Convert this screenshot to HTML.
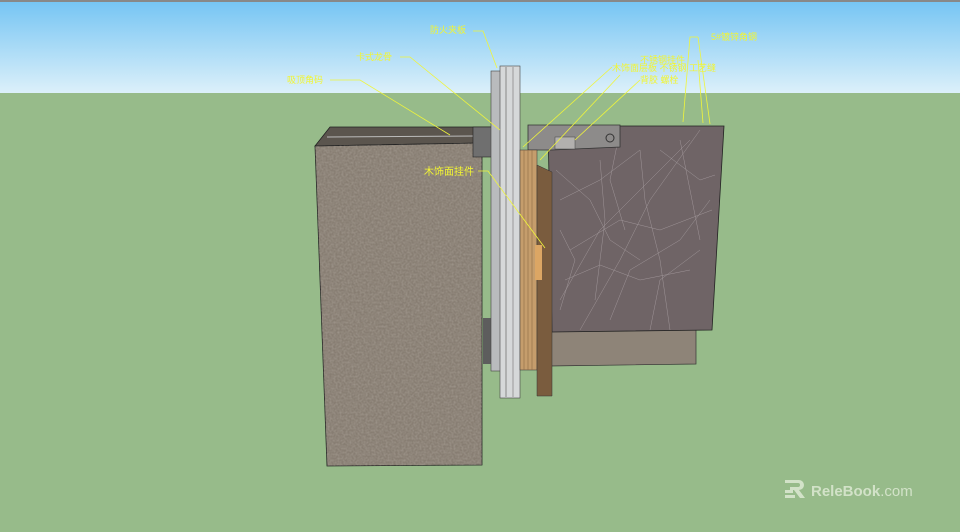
<!DOCTYPE html>
<html><head><meta charset="utf-8"><style>
html,body{margin:0;padding:0;width:960px;height:532px;overflow:hidden;background:#97bb8a}
svg{display:block}
text{font-family:"Liberation Sans","Noto Sans CJK SC",sans-serif}
</style></head><body>
<svg width="960" height="532" viewBox="0 0 960 532">
<defs>
<linearGradient id="sky" x1="0" y1="0" x2="0" y2="1"><stop offset="0" stop-color="#74c4f3"/><stop offset="1" stop-color="#dcf0fa"/></linearGradient>
<filter id="n1"><feTurbulence type="fractalNoise" baseFrequency="0.5" numOctaves="2" seed="3"/><feColorMatrix values="0 0 0 0 0.62  0 0 0 0 0.58  0 0 0 0 0.52  0 0 0 0.5 -0.15"/><feComposite in2="SourceGraphic" operator="in"/></filter>
</defs>
<rect width="960" height="93" fill="url(#sky)"/>
<rect width="960" height="2" fill="#888"/>
<rect y="93" width="960" height="439" fill="#97bb8a"/>
<polygon points="548,330 696,330 696,364 550,366" fill="#8e8478" stroke="#333" stroke-width="0.7"/>
<polygon points="548,126 724,126 712,330 552,332" fill="#6f6466" stroke="#222" stroke-width="0.8"/>
<g stroke="#cfc7ca" stroke-width="0.5" fill="none" opacity="0.5">
<path d="M560,300 L600,230 L640,190 L690,140"/><path d="M580,330 L620,260 L650,200 L700,130"/><path d="M610,320 L630,270 L680,240 L710,200"/><path d="M560,200 L600,180 L640,150"/><path d="M650,330 L660,280 L700,250"/><path d="M570,250 L620,220 L660,230 L712,210"/>
<path d="M600,160 L605,220 L595,300"/><path d="M640,150 L645,200 L660,260 L670,330"/><path d="M680,140 L690,190 L700,240"/><path d="M556,170 L590,200 L610,240 L640,260"/><path d="M565,280 L600,265 L640,280 L690,270"/><path d="M620,130 L610,180 L625,230"/><path d="M660,150 L700,180 L715,175"/><path d="M560,230 L575,260 L560,310"/>
</g>
<polygon points="528,125 620,125 620,147 552,150 528,150" fill="#8d8b8a" stroke="#333" stroke-width="0.8"/>
<rect x="555" y="137" width="20" height="12" fill="#b2b0ae" stroke="#444" stroke-width="0.5"/>
<circle cx="610" cy="138" r="4" fill="none" stroke="#333"/>
<polygon points="315,146 330,127 508,127 508,140 482,143" fill="#5b554e" stroke="#222" stroke-width="0.8"/>
<line x1="327" y1="137" x2="475" y2="136" stroke="#bbb" stroke-width="1"/>
<polygon points="315,146 482,143 482,465 327,466" fill="#877d72" stroke="#222" stroke-width="0.8"/>
<polygon points="315,146 482,143 482,465 327,466" fill="#877d72" filter="url(#n1)"/>
<rect x="483" y="318" width="14" height="46" fill="#5d5d5d"/>
<rect x="473" y="127" width="40" height="30" fill="#6f6f6f" stroke="#222" stroke-width="0.6"/>
<rect x="491" y="71" width="10" height="300" fill="#b9bbbd" stroke="#444" stroke-width="0.6"/>
<rect x="500" y="66" width="20" height="332" fill="#d6d8d9" stroke="#444" stroke-width="0.6"/>
<line x1="506" y1="67" x2="506" y2="397" stroke="#888" stroke-width="1"/>
<line x1="513" y1="67" x2="513" y2="397" stroke="#999" stroke-width="1"/>
<rect x="520" y="150" width="17" height="220" fill="#c59d6c" stroke="#333" stroke-width="0.5"/>
<g stroke="#8b6a45" stroke-width="0.6"><line x1="524" y1="150" x2="524" y2="370"/><line x1="528" y1="150" x2="528" y2="370"/><line x1="532" y1="150" x2="532" y2="370"/></g>
<polygon points="537,165 552,172 552,396 537,396" fill="#7a5c3e" stroke="#333" stroke-width="0.5"/>
<rect x="535" y="245" width="7" height="35" fill="#dca664"/>
<g stroke="#f0f53a" stroke-width="0.8" fill="none">
<path d="M473,31 L483,31 L497,68"/>
<path d="M400,57 L410,57 L500,130"/>
<path d="M330,80 L360,80 L450,135"/>
<path d="M478,171 L488,171 L545,248"/>
<path d="M612,67 L523,147"/><path d="M620,75 L540,160"/><path d="M640,80 L575,140"/>
<path d="M698,37 L690,37 L683,122"/><path d="M698,37 L710,124"/><path d="M698,60 L703,123"/>
</g>
<g fill="#f2f533" font-size="9">
<text x="430" y="33">防火夹板</text>
<text x="356" y="60">卡式龙骨</text>
<text x="287" y="83">吸顶角码</text>
<text x="424" y="175" font-size="10">木饰面挂件</text>
<text x="711" y="40">5#镀锌角钢</text>
<text x="640" y="63">不锈钢挂件</text>
<text x="612" y="71">木饰面层板 不锈钢 工艺缝</text>
<text x="640" y="83">背胶 螺栓</text>
</g>
<g fill="#d2e2c8">
<path d="M785,480 h14 a5,5 0 0 1 0,10 l6,8 h-5 l-6,-8 h-4 v-3 h8 a2,2 0 0 0 0,-4 h-13z"/>
<rect x="785" y="490" width="8" height="3"/><rect x="785" y="495" width="10" height="3"/>
<text x="811" y="496" font-size="15" font-weight="bold">ReleBook<tspan font-weight="normal">.com</tspan></text>
</g>
</svg>
</body></html>
